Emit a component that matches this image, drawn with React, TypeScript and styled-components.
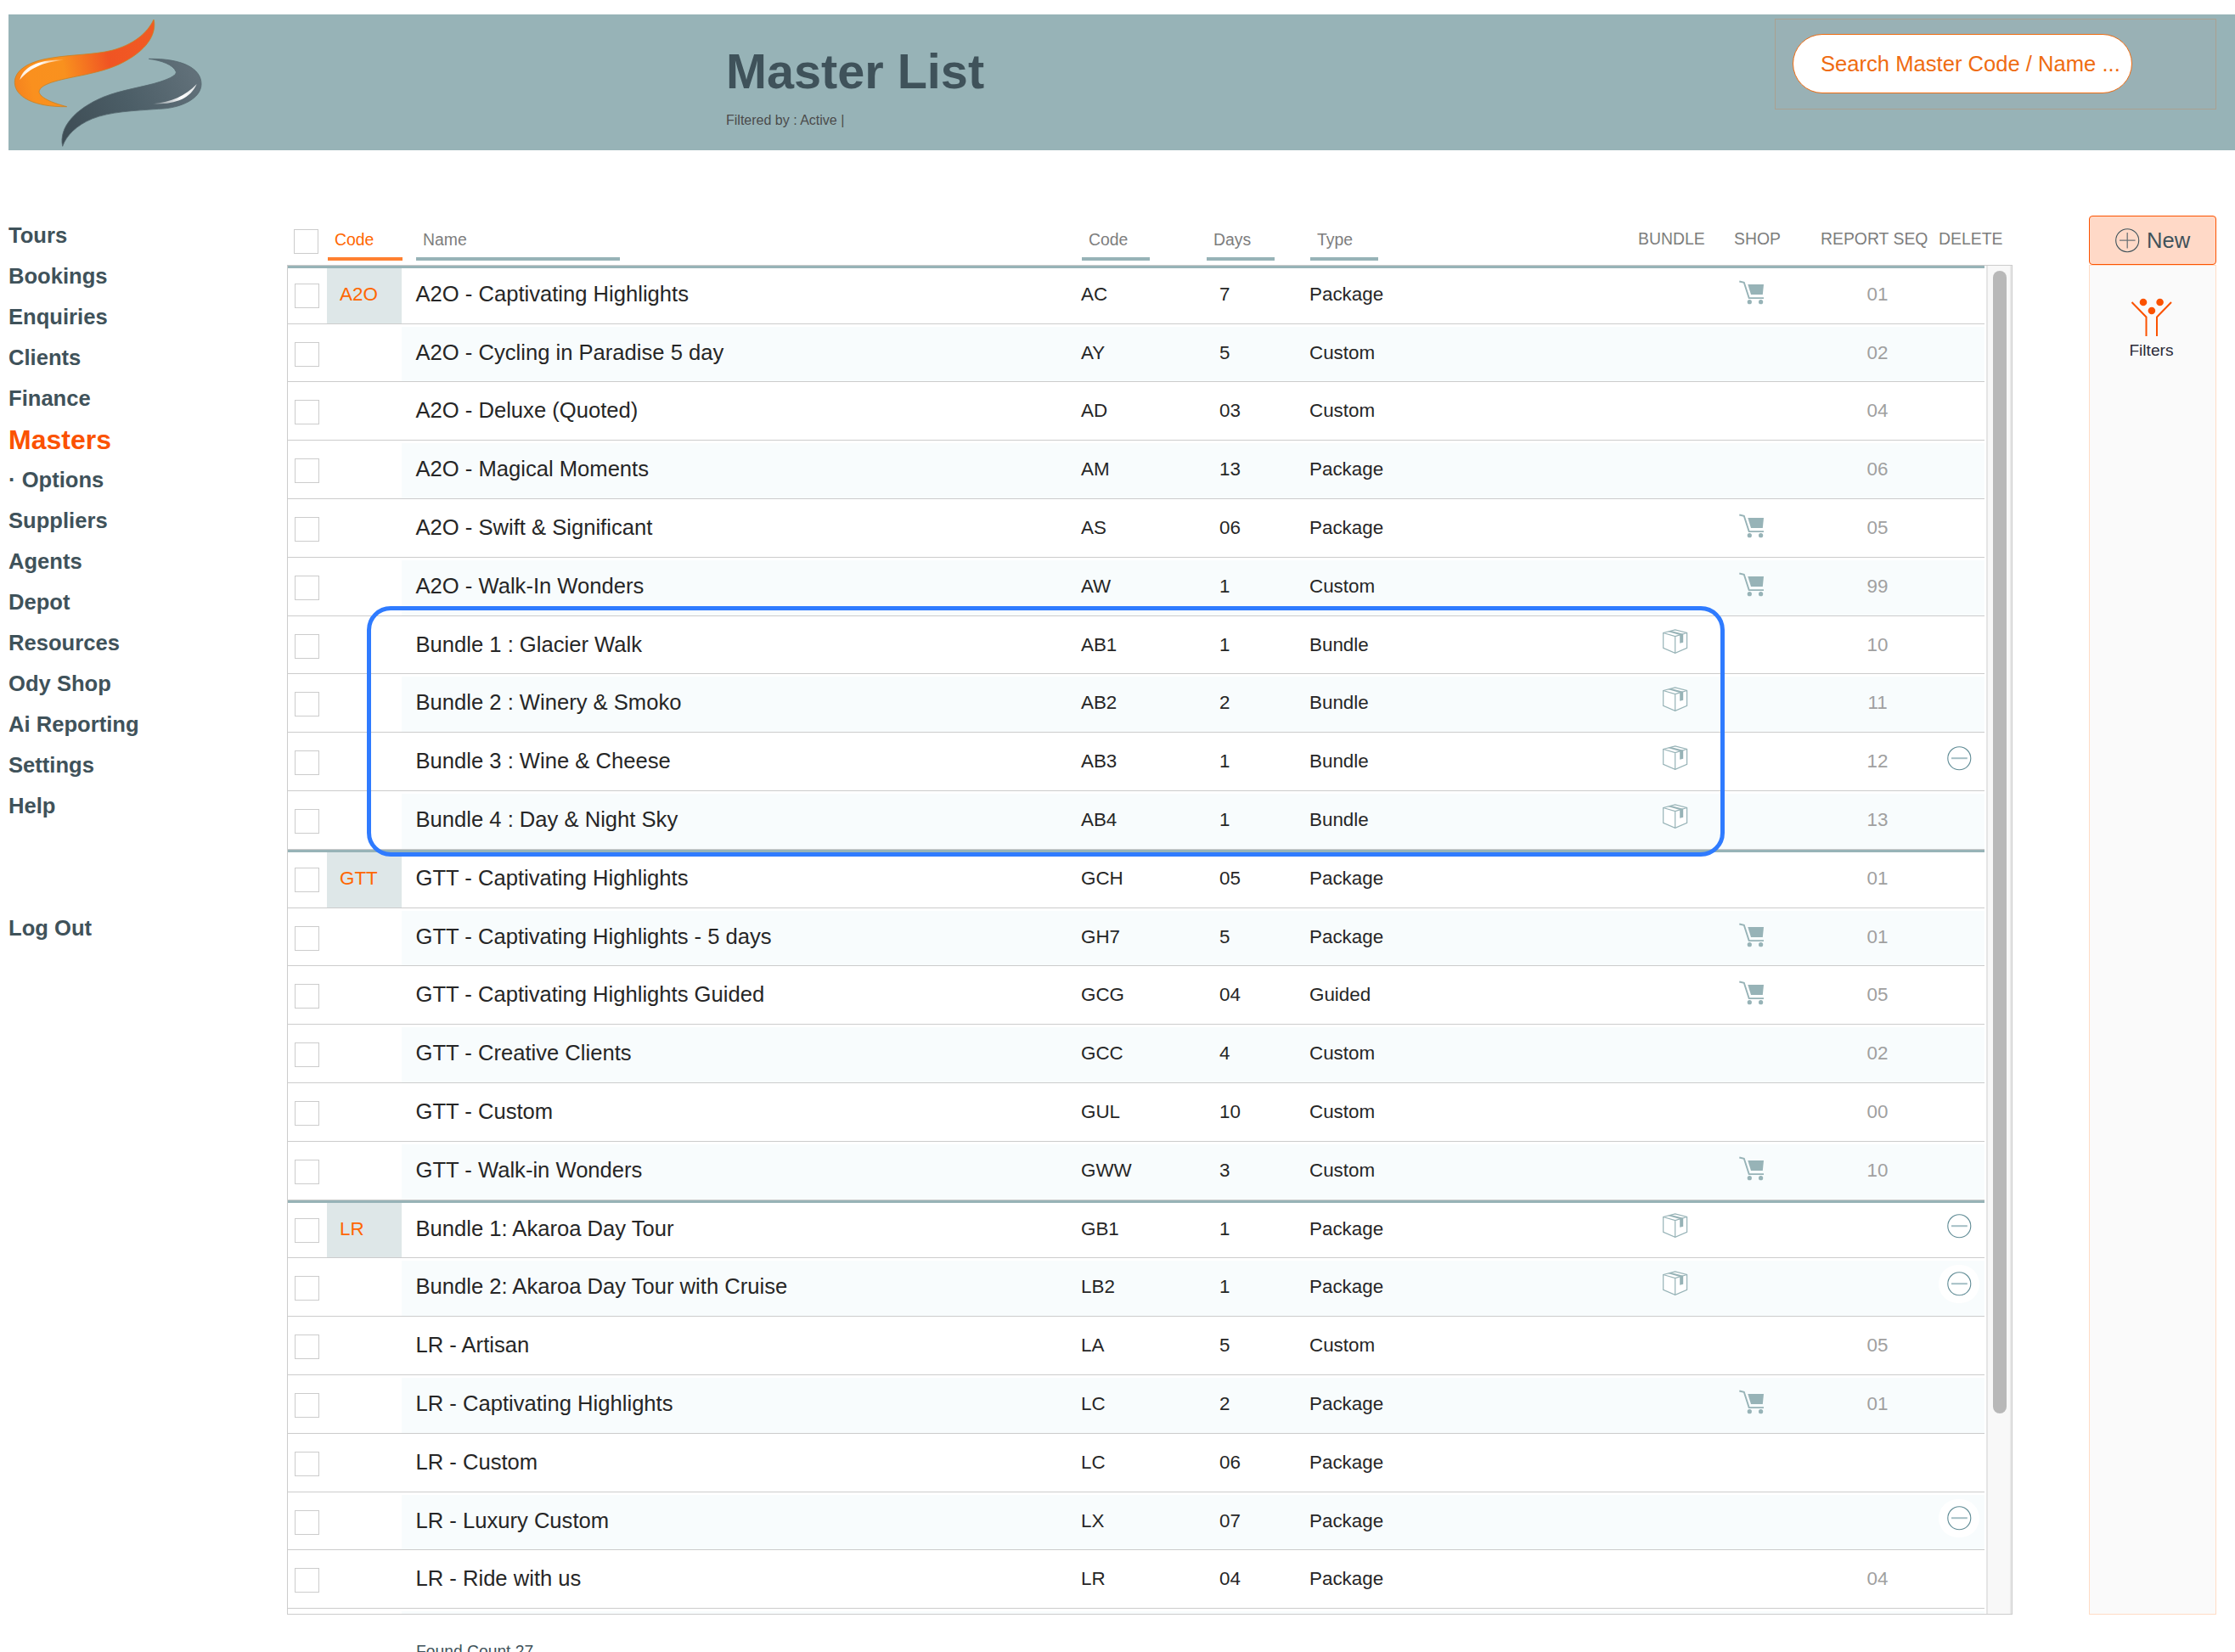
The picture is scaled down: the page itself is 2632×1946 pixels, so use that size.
import React from "react";
import styled, { createGlobalStyle } from "styled-components";

const teal = "#97b3b7";
const slate = "#3f525a";
const orange = "#ff6600";

const GlobalStyle = createGlobalStyle`
  *, *::before, *::after { box-sizing: border-box; }
  html, body { margin: 0; padding: 0; background: #fff; }
  body { font-family: "Liberation Sans", Arial, Helvetica, sans-serif; overflow: hidden; }
`;

const Page = styled.div`
  width: 2632px;
  height: 1946px;
  overflow: hidden;
  padding: 17px 0 0 10px;
  background: #fff;
`;

const Header = styled.header`
  height: 160px;
  display: flex;
  background: ${teal};
`;

const LogoBox = styled.div`
  width: 845px;
  flex: none;
  svg { display: block; }
`;

const TitleBlock = styled.div`
  width: 1235px;
  flex: none;
  padding-top: 34px;
`;

const Title = styled.h1`
  margin: 0;
  font-size: 57.6px;
  line-height: 66px;
  font-weight: 700;
  color: ${slate};
`;

const FilterNote = styled.div`
  margin-top: 15px;
  font-size: 16px;
  line-height: 20px;
  color: #4b4b4b;
`;

const SearchPanel = styled.div`
  width: 520px;
  height: 107px;
  margin-top: 5px;
  padding: 17px 20px;
  border: 1px solid rgba(200, 130, 80, 0.36);
  background: rgba(170, 170, 175, 0.15);
`;

const SearchPill = styled.div`
  width: 400px;
  height: 70px;
  padding-left: 32px;
  border: 1px solid #ef6c12;
  border-radius: 35px;
  background: #fff;
  color: #ef6c12;
  font-size: 25.6px;
  line-height: 68px;
  white-space: nowrap;
`;

const Body = styled.div`
  display: flex;
  align-items: flex-start;
  padding-top: 76px;
`;

const Sidebar = styled.nav`
  width: 328px;
  flex: none;
  display: flex;
  flex-direction: column;
`;

const NavItem = styled.a<{ $active?: boolean; $apart?: boolean }>`
  height: 48px;
  line-height: ${(p) => (p.$active ? 50 : 48)}px;
  font-weight: 700;
  font-size: ${(p) => (p.$active ? 32 : 25.6)}px;
  color: ${(p) => (p.$active ? "#fb5200" : slate)};
  margin-top: ${(p) => (p.$apart ? 96 : 0)}px;
  white-space: pre;
`;

const Main = styled.main`
  width: 2122px;
  flex: none;
`;

const HeadRow = styled.div`
  display: grid;
  grid-template-columns: 48px 104px 784px 147px 122px 386px 113px 102px 139px 90px;
  height: 59px;
  align-items: start;
  font-size: 19.4px;
  white-space: nowrap;
`;

const SortHead = styled.div<{ $width: number; $active?: boolean }>`
  width: ${(p) => p.$width}px;
  height: 54px;
  padding: 8px 0 0 8px;
  line-height: 42px;
  border-bottom: 4px solid ${(p) => (p.$active ? "#ff8030" : teal)};
  color: ${(p) => (p.$active ? orange : "#7d7d7d")};
`;

const PlainHead = styled.div`
  padding-top: 7px;
  line-height: 42px;
  color: #7d7d7d;
`;

const CheckBox = styled.span`
  display: block;
  flex: none;
  width: 29px;
  height: 29px;
  border: 1px solid #ccc;
  background: #fff;
`;

const HeadCheck = styled.div`
  padding: 17px 0 0 8px;
`;

const TableFrame = styled.section`
  position: relative;
  width: 2032px;
  height: 1590px;
  display: flex;
  border: 1px solid #ccc;
`;

const Rows = styled.div`
  width: 1998px;
  flex: none;
  height: 100%;
  overflow: hidden;
`;

const Row = styled.div<{ $height: number; $groupStart: boolean }>`
  height: ${(p) => p.$height}px;
  display: flex;
  border-top: 3px solid ${(p) => (p.$groupStart ? teal : "#fff")};
  border-bottom: 1px solid #ccc;
`;

const CheckCell = styled.div`
  width: 46px;
  flex: none;
  padding: 18px 0 0 8px;
`;

const GroupCell = styled.div<{ $filled: boolean }>`
  width: 88px;
  flex: none;
  padding-left: 15px;
  font-size: 22.4px;
  line-height: 61px;
  color: ${orange};
  background: ${(p) => (p.$filled ? "#dee7e8" : "#fff")};
`;

const Details = styled.div<{ $alt: boolean }>`
  flex: 1;
  display: grid;
  grid-template-columns: 800px 163px 106px 381px 99px 123px 132px 60px;
  background: ${(p) => (p.$alt ? "#f8fcfd" : "#fff")};
  font-size: 22.4px;
  line-height: 61px;
  color: #262626;
  white-space: nowrap;
`;

const NameCell = styled.div`
  padding-left: 16.5px;
  font-size: 25.6px;
`;

const Cell = styled.div``;

const SeqCell = styled.div`
  text-align: center;
  color: #a0a0a0;
`;

const IconCell = styled.div<{ $left: number; $top: number }>`
  padding: ${(p) => p.$top}px 0 0 ${(p) => p.$left}px;
  svg { display: block; }
`;

const DeleteHalo = styled.div`
  width: 48px;
  height: 45px;
  display: flex;
  align-items: center;
  justify-content: center;
  border-radius: 23px;
  background: #fff;
`;

const ScrollTrack = styled.div`
  width: 30px;
  flex: none;
  margin-left: 2px;
  padding: 6px 0 0 6px;
  background: #f8f8f8;
  border-left: 2px solid #e5e5e5;
  border-right: 2px solid #e8e8e8;
`;

const ScrollThumb = styled.div`
  width: 16px;
  height: 1346px;
  border-radius: 8px;
  background: #b8b8b8;
`;

const Highlight = styled.div`
  position: absolute;
  left: 93px;
  top: 401px;
  width: 1599px;
  height: 295px;
  border: 5px solid #2f7bff;
  border-radius: 28px;
`;

const FoundCount = styled.div`
  margin: 32px 0 0 152px;
  font-size: 19.3px;
  line-height: 24px;
  color: ${slate};
`;

const Tools = styled.aside`
  width: 150px;
  flex: none;
  margin-top: 1px;
`;

const NewButton = styled.div`
  height: 58px;
  display: flex;
  padding-left: 30px;
  border: 1px solid #fb5200;
  border-radius: 4px;
  background: #ffd9c7;
  color: ${slate};
  font-size: 25.6px;
  line-height: 56px;
  svg { flex: none; margin: 14px 8px 0 0; }
`;

const ToolPanel = styled.div`
  height: 1590px;
  border: 1px solid #ffdcc5;
  background: #fafafa;
  display: flex;
  flex-direction: column;
  align-items: center;
  padding: 38px 3px 0 0;
  font-size: 19.2px;
  color: #2b2b38;
  span { line-height: 24px; margin-top: 4px; }
`;

const Logo = () => (
  <svg width="260" height="160" viewBox="30 51 780 480">
    <defs>
      <linearGradient id="flame" x1="51" y1="300" x2="547" y2="200" gradientUnits="userSpaceOnUse">
        <stop offset="0" stopColor="#f5821f" />
        <stop offset="0.12" stopColor="#fa901e" />
        <stop offset="0.36" stopColor="#f9911e" />
        <stop offset="0.68" stopColor="#f05423" />
        <stop offset="1" stopColor="#f15a24" />
      </linearGradient>
      <linearGradient id="steel" x1="220" y1="500" x2="712" y2="260" gradientUnits="userSpaceOnUse">
        <stop offset="0" stopColor="#3d4c54" />
        <stop offset="0.5" stopColor="#4c5e67" />
        <stop offset="1" stopColor="#63727b" />
      </linearGradient>
      <linearGradient id="shineA" x1="70" y1="280" x2="225" y2="212" gradientUnits="userSpaceOnUse">
        <stop offset="0" stopColor="#fff" stopOpacity="0.85" />
        <stop offset="0.5" stopColor="#fff" />
        <stop offset="1" stopColor="#fff" stopOpacity="0.2" />
      </linearGradient>
      <linearGradient id="shineB" x1="695" y1="298" x2="540" y2="368" gradientUnits="userSpaceOnUse">
        <stop offset="0" stopColor="#fff" stopOpacity="0.8" />
        <stop offset="0.4" stopColor="#fff" />
        <stop offset="1" stopColor="#fff" stopOpacity="0.2" />
      </linearGradient>
    </defs>
    <path
      d="M543 69C520 118 470 158 395 178C330 194 255 192 180 205C100 217 51 249 52 292C53 342 120 379 236 377C180 362 142 345 138 325C140 292 230 279 300 264C365 250 410 236 450 212C510 178 550 130 545 78Z"
      fill="url(#flame)"
      stroke="#c98225"
      strokeWidth="2.5"
    />
    <path d="M70 282C82 236 140 209 225 212C150 220 105 240 70 282Z" fill="url(#shineA)" />
    <path
      d="M526 208C640 206 711 240 711 297C711 348 640 383 560 385C470 392 390 394 325 420C270 443 235 478 221 517C207 450 265 385 365 343C430 317 510 307 565 289C605 276 624 264 622 254C612 228 570 214 526 208Z"
      fill="url(#steel)"
      stroke="#56676f"
      strokeWidth="2.5"
    />
    <path d="M695 297C672 350 615 370 540 367C605 360 655 340 695 297Z" fill="url(#shineB)" />
  </svg>
);

const CartIcon = () => (
  <svg width="30" height="29" viewBox="0 0 30 29">
    <path d="M0.3 1.5L5.8 2.8L11.7 21.1H29" fill="none" stroke={teal} strokeWidth="1.9" />
    <path d="M10.3 5H29L27.8 17H14Z" fill={teal} />
    <circle cx="12.3" cy="25.7" r="2.6" fill={teal} />
    <circle cx="25.6" cy="25.7" r="2.6" fill={teal} />
  </svg>
);

const BoxIcon = () => (
  <svg width="30" height="30" viewBox="0 0 30 30">
    <path d="M0.7 4.5L14.7 0.9L28.6 4.5V22.3L14.7 28.4L0.7 22.3Z" fill="#fff" stroke={teal} strokeWidth="1.2" />
    <path d="M0.7 4.5L14.7 8.6L28.6 4.5M14.7 8.6V28.4" fill="none" stroke={teal} strokeWidth="1.2" />
    <path d="M6 2.9L9.8 1.9L24.2 5.7V15.7L20.2 16.8V7Z" fill={teal} />
  </svg>
);

const MinusIcon = () => (
  <svg width="29" height="29" viewBox="0 0 29 29">
    <circle cx="14.3" cy="14.3" r="13.5" fill="#fff" stroke="#5f8b95" strokeWidth="1.1" />
    <path d="M5 14.2H23.8" stroke="#a4bfc5" strokeWidth="2" />
  </svg>
);

const PlusIcon = () => (
  <svg width="29" height="29" viewBox="0 0 29 29">
    <circle cx="14.2" cy="14.2" r="13.5" fill="none" stroke={slate} strokeWidth="1.1" />
    <path d="M5 14.2H23.6M14.2 5V23.6" stroke="#6e7376" strokeWidth="1.3" />
  </svg>
);

const FiltersIcon = () => (
  <svg width="50" height="46" viewBox="0 0 50 46">
    <g fill="none" stroke="#fb5200" strokeWidth="2">
      <path d="M1.5 5L18.5 22.5V45" />
      <path d="M48 5L31 22.5V45" />
    </g>
    <g fill="#fb5200">
      <circle cx="15" cy="5" r="4.3" />
      <circle cx="34.6" cy="5" r="4.3" />
      <circle cx="24.9" cy="15" r="4.3" />
    </g>
  </svg>
);

const NAV = [
  "Tours", "Bookings", "Enquiries", "Clients", "Finance", "Masters", "· Options", "Suppliers",
  "Agents", "Depot", "Resources", "Ody Shop", "Ai Reporting", "Settings", "Help", "Log Out",
];

interface Master {
  group?: string;
  name: string;
  code: string;
  days: string;
  type: string;
  seq?: string;
  bundle?: boolean;
  shop?: boolean;
  removable?: boolean;
}

const MASTERS: Master[] = [
  { group: "A2O", name: "A2O - Captivating Highlights", code: "AC", days: "7", type: "Package", shop: true, seq: "01" },
  { name: "A2O - Cycling in Paradise 5 day", code: "AY", days: "5", type: "Custom", seq: "02" },
  { name: "A2O - Deluxe (Quoted)", code: "AD", days: "03", type: "Custom", seq: "04" },
  { name: "A2O - Magical Moments", code: "AM", days: "13", type: "Package", seq: "06" },
  { name: "A2O - Swift & Significant", code: "AS", days: "06", type: "Package", shop: true, seq: "05" },
  { name: "A2O - Walk-In Wonders", code: "AW", days: "1", type: "Custom", shop: true, seq: "99" },
  { name: "Bundle 1 : Glacier Walk", code: "AB1", days: "1", type: "Bundle", bundle: true, seq: "10" },
  { name: "Bundle 2 : Winery & Smoko", code: "AB2", days: "2", type: "Bundle", bundle: true, seq: "11" },
  { name: "Bundle 3 : Wine & Cheese", code: "AB3", days: "1", type: "Bundle", bundle: true, seq: "12", removable: true },
  { name: "Bundle 4 : Day & Night Sky", code: "AB4", days: "1", type: "Bundle", bundle: true, seq: "13" },
  { group: "GTT", name: "GTT - Captivating Highlights", code: "GCH", days: "05", type: "Package", seq: "01" },
  { name: "GTT - Captivating Highlights - 5 days", code: "GH7", days: "5", type: "Package", shop: true, seq: "01" },
  { name: "GTT - Captivating Highlights Guided", code: "GCG", days: "04", type: "Guided", shop: true, seq: "05" },
  { name: "GTT - Creative Clients", code: "GCC", days: "4", type: "Custom", seq: "02" },
  { name: "GTT - Custom", code: "GUL", days: "10", type: "Custom", seq: "00" },
  { name: "GTT - Walk-in Wonders", code: "GWW", days: "3", type: "Custom", shop: true, seq: "10" },
  { group: "LR", name: "Bundle 1: Akaroa Day Tour", code: "GB1", days: "1", type: "Package", bundle: true, removable: true },
  { name: "Bundle 2: Akaroa Day Tour with Cruise", code: "LB2", days: "1", type: "Package", bundle: true, removable: true },
  { name: "LR - Artisan", code: "LA", days: "5", type: "Custom", seq: "05" },
  { name: "LR - Captivating Highlights", code: "LC", days: "2", type: "Package", shop: true, seq: "01" },
  { name: "LR - Custom", code: "LC", days: "06", type: "Package" },
  { name: "LR - Luxury Custom", code: "LX", days: "07", type: "Package", removable: true },
  { name: "LR - Ride with us", code: "LR", days: "04", type: "Package", seq: "04" },
];

// Rows repeat every 68.8px; whole-pixel heights keep the dividers crisp.
const rowEnd = (i: number) => Math.floor(69.1 + 68.8 * i);
const rowHeight = (i: number) => (i === 0 ? 69 : rowEnd(i) - rowEnd(i - 1));

const MasterRow = ({ master, index }: { master: Master; index: number }) => (
  <Row $height={rowHeight(index)} $groupStart={!!master.group}>
    <CheckCell><CheckBox /></CheckCell>
    <GroupCell $filled={!!master.group}>{master.group}</GroupCell>
    <Details $alt={index % 2 === 1}>
      <NameCell>{master.name}</NameCell>
      <Cell>{master.code}</Cell>
      <Cell>{master.days}</Cell>
      <Cell>{master.type}</Cell>
      <IconCell $left={35} $top={12}>{master.bundle && <BoxIcon />}</IconCell>
      <IconCell $left={26} $top={14}>{master.shop && <CartIcon />}</IconCell>
      <SeqCell>{master.seq}</SeqCell>
      <IconCell $left={6} $top={5}>{master.removable && <DeleteHalo><MinusIcon /></DeleteHalo>}</IconCell>
    </Details>
  </Row>
);

export default function App() {
  return (
    <>
      <GlobalStyle />
      <Page>
        <Header>
          <LogoBox><Logo /></LogoBox>
          <TitleBlock>
            <Title>Master List</Title>
            <FilterNote>Filtered by : Active |</FilterNote>
          </TitleBlock>
          <SearchPanel>
            <SearchPill>Search Master Code / Name ...</SearchPill>
          </SearchPanel>
        </Header>
        <Body>
          <Sidebar>
            {NAV.map((item) => (
              <NavItem key={item} $active={item === "Masters"} $apart={item === "Log Out"}>{item}</NavItem>
            ))}
          </Sidebar>
          <Main>
            <HeadRow>
              <HeadCheck><CheckBox /></HeadCheck>
              <SortHead $width={88} $active>Code</SortHead>
              <SortHead $width={240}>Name</SortHead>
              <SortHead $width={80}>Code</SortHead>
              <SortHead $width={80}>Days</SortHead>
              <SortHead $width={80}>Type</SortHead>
              <PlainHead>BUNDLE</PlainHead>
              <PlainHead>SHOP</PlainHead>
              <PlainHead>REPORT SEQ</PlainHead>
              <PlainHead>DELETE</PlainHead>
            </HeadRow>
            <TableFrame>
              <Rows>
                {MASTERS.map((m, i) => <MasterRow key={i} master={m} index={i} />)}
                <Row $height={69} $groupStart={false}>
                  <CheckCell />
                  <GroupCell $filled={false} />
                  <Details $alt />
                </Row>
              </Rows>
              <ScrollTrack><ScrollThumb /></ScrollTrack>
              <Highlight />
            </TableFrame>
            <FoundCount>Found Count 27</FoundCount>
          </Main>
          <Tools>
            <NewButton><PlusIcon />New</NewButton>
            <ToolPanel>
              <FiltersIcon />
              <span>Filters</span>
            </ToolPanel>
          </Tools>
        </Body>
      </Page>
    </>
  );
}
